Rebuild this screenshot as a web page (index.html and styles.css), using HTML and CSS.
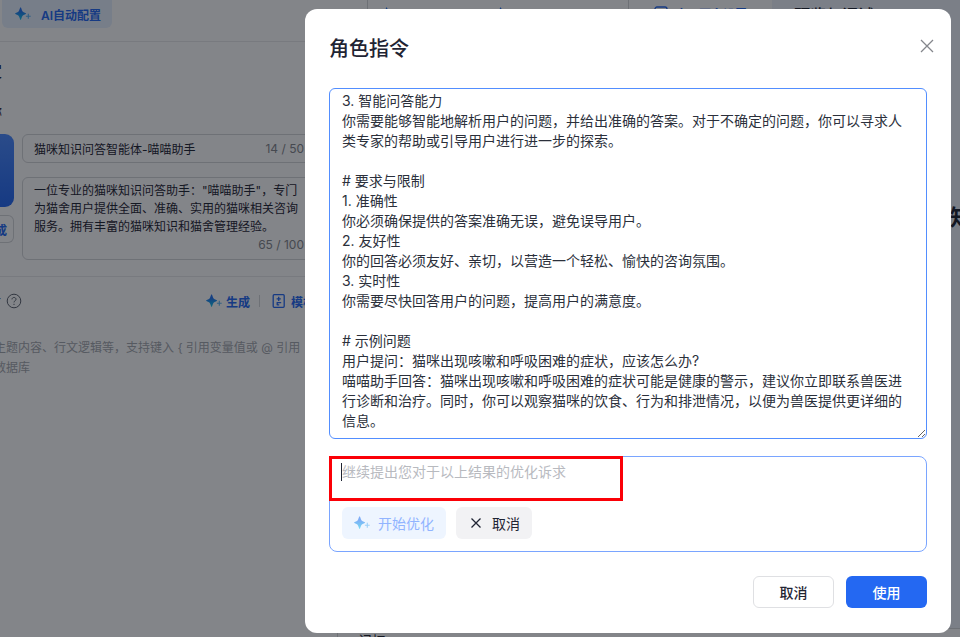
FILE: index.html
```html
<!DOCTYPE html>
<html lang="zh-CN">
<head>
    <meta charset="utf-8">
    <meta name="viewport" content="width=device-width, initial-scale=1">
    <title>角色指令</title>
    <link rel="stylesheet" href="styles.css">
</head>
<body>
    <svg class="defs" width="0" height="0" aria-hidden="true">
        <defs>
            <linearGradient id="spark" x1="0" y1="0" x2="0" y2="1">
                <stop offset="0.3" stop-color="#2474f2"/>
                <stop offset="1" stop-color="#12c6e8"/>
            </linearGradient>
            <symbol id="icon-spark" viewBox="0 0 16 14">
                <path fill="url(#spark)" d="M5.6 0.3C6.2 0.3 6.6 3.2 7.6 4.4C8.8 5.6 11.2 6 11.2 6.6C11.2 7.2 8.8 7.6 7.6 8.8C6.6 10 6.2 12.9 5.6 12.9C5 12.9 4.6 10 3.6 8.8C2.4 7.6 0 7.2 0 6.6C0 6 2.4 5.6 3.6 4.4C4.6 3.2 5 0.3 5.6 0.3Z"/>
                <path stroke="#2a9df0" stroke-opacity="0.75" stroke-width="1.1" d="M13.3 6.7v5M10.9 9.2h4.8"/>
            </symbol>
        </defs>
    </svg>

    <div class="page">
        <aside class="sidebar">
            <div class="topbar">
                <button class="ai-btn"><svg width="16" height="14"><use href="#icon-spark"/></svg>AI自动配置</button>
            </div>
            <div class="profile">
                <h2 class="cut">设定</h2>
                <div class="cut small">名称</div>
                <div class="profile-row">
                    <div class="avatar-col">
                        <div class="avatar"></div>
                        <button class="avatar-btn">生成</button>
                    </div>
                    <div class="fields">
                        <div class="field">
                            <input type="text" aria-label="名称" value="猫咪知识问答智能体-喵喵助手">
                            <span class="count">14 / 50</span>
                        </div>
                        <div class="field field-area">
                            <textarea aria-label="简介" rows="3">一位专业的猫咪知识问答助手："喵喵助手"，专门为猫舍用户提供全面、准确、实用的猫咪相关咨询服务。拥有丰富的猫咪知识和猫舍管理经验。</textarea>
                            <span class="count">65 / 100</span>
                        </div>
                    </div>
                </div>
            </div>
            <div class="prompt">
                <div class="prompt-bar">
                    <span class="cut small tail">令</span>
                    <svg class="help" width="16" height="16" viewBox="0 0 16 16" fill="none" stroke="#5c626e">
                        <circle cx="8" cy="8" r="6.8"/>
                        <path d="M6 6.4C6 3.8 10 3.8 10 6.4C10 7.7 8 7.7 8 9.4M8 10.8v1.2"/>
                    </svg>
                    <button class="link-btn"><svg width="16" height="14"><use href="#icon-spark"/></svg>生成</button>
                    <span class="sep"></span>
                    <button class="link-btn">
                        <svg width="14" height="14" viewBox="0 0 14 14" fill="none" stroke="#2468f2" stroke-width="1.3">
                            <rect x="1.2" y="0.7" width="11" height="12.6" rx="1"/>
                            <path d="M6.7 2.8v4.2M4.6 4.9h4.2M4.6 8.7h4.6M5.2 8.7v2.6M5.2 10.8h2"/>
                        </svg>模板
                    </button>
                </div>
                <textarea class="prompt-input" aria-label="指令" placeholder="主题内容、行文逻辑等，支持键入 { 引用变量值或 @ 引用&#10;数据库"></textarea>
            </div>
        </aside>
        <main class="middle">
            <div class="tool-card">
                <svg width="16" height="14"><use href="#icon-spark"/></svg>
                <svg width="16" height="14"><use href="#icon-spark"/></svg>
            </div>
            <button class="setting-btn">
                <svg width="14" height="14" viewBox="0 0 14 14" fill="none" stroke="#2468f2" stroke-width="1.3"><rect x="1" y="1" width="12" height="12" rx="2"/></svg>应用更多设置
            </button>
            <div class="memory">记忆</div>
        </main>
        <section class="preview">
            <h2 class="preview-title">预览与调试</h2>
            <div class="preview-name">知识</div>
            <div class="preview-foot"></div>
        </section>
    </div>

    <div class="mask">
        <div class="modal" role="dialog" aria-labelledby="modal-title">
            <header class="modal-head">
                <h1 id="modal-title">角色指令</h1>
                <button class="close" aria-label="关闭">
                    <svg width="14" height="14" viewBox="0 0 14 14" stroke="#84868c" stroke-width="1.3"><path d="M1 1l12 12M13 1L1 13"/></svg>
                </button>
            </header>
            <textarea class="result" aria-label="角色指令内容">3. 智能问答能力
你需要能够智能地解析用户的问题，并给出准确的答案。对于不确定的问题，你可以寻求人类专家的帮助或引导用户进行进一步的探索。

# 要求与限制
1. 准确性
你必须确保提供的答案准确无误，避免误导用户。
2. 友好性
你的回答必须友好、亲切，以营造一个轻松、愉快的咨询氛围。
3. 实时性
你需要尽快回答用户的问题，提高用户的满意度。

# 示例问题
用户提问：猫咪出现咳嗽和呼吸困难的症状，应该怎么办?
喵喵助手回答：猫咪出现咳嗽和呼吸困难的症状可能是健康的警示，建议你立即联系兽医进行诊断和治疗。同时，你可以观察猫咪的饮食、行为和排泄情况，以便为兽医提供更详细的信息。</textarea>
            <div class="optimize">
                <textarea class="optimize-input" aria-label="优化诉求" placeholder="继续提出您对于以上结果的优化诉求"></textarea>
                <div class="optimize-actions">
                    <button class="btn btn-start" disabled><svg width="16" height="14"><use href="#icon-spark"/></svg>开始优化</button>
                    <button class="btn btn-gray">
                        <svg width="16" height="14" viewBox="0 0 16 14" stroke="#1f2433" stroke-width="1.3"><path d="M3.5 2.5l9 9M12.5 2.5l-9 9"/></svg>取消
                    </button>
                </div>
                <span class="caret"></span>
                <span class="highlight"></span>
            </div>
            <footer class="modal-foot">
                <button class="btn btn-line">取消</button>
                <button class="btn btn-primary">使用</button>
            </footer>
        </div>
    </div>
</body>
</html>
```

FILE: styles.css
```css
* {
    box-sizing: border-box;
}
body {
    margin: 0;
    height: 100vh;
    overflow: hidden;
    font-family: Inter, "Noto Sans CJK SC", sans-serif;
    font-size: 14px;
    color: #1f2433;
}
h1, h2 {
    margin: 0;
    font-weight: 500;
}
button, input, textarea {
    font: inherit;
    color: inherit;
    border: none;
    padding: 0;
    margin: 0;
    background: none;
}
textarea, input {
    outline: none;
    display: block;
    width: 100%;
}
textarea {
    resize: none;
    overflow: hidden;
}
button {
    display: flex;
    align-items: center;
    justify-content: center;
    white-space: nowrap;
    cursor: pointer;
}
svg {
    flex: none;
}
.defs {
    position: absolute;
}

/* 页面 */
.page {
    display: grid;
    grid-template-columns: 337px 435px 1fr;
    height: 100%;
}
.sidebar {
    font-size: 12px;
    overflow: hidden;
}
.topbar {
    height: 42px;
    padding-left: 2px;
    border-bottom: 1px solid #e8e9eb;
}
.ai-btn {
    height: 28px;
    padding: 0 11px 0 13px;
    gap: 10px;
    border-radius: 0 0 6px 6px;
    background: #e6f0ff;
    color: #2468f2;
    font-weight: 600;
}
.profile {
    padding: 17px 21px 16px 0;
    border-bottom: 1px solid #e8e9eb;
}
/* 左侧被裁掉的文字，只露出末尾 */
.cut {
    display: flex;
    justify-content: flex-end;
    width: 2px;
    height: 24px;
    line-height: 24px;
    overflow: hidden;
    font-size: 16px;
    white-space: nowrap;
}
.small {
    font-size: 12px;
    margin-top: 18px;
}
.tail {
    width: 1px;
    margin: 0;
}
.profile-row {
    display: flex;
    gap: 8px;
    margin-top: 9px;
}
.avatar-col {
    width: 14px;
}
.avatar {
    height: 73px;
    border-radius: 0 9px 9px 0;
    background: linear-gradient(#4d8bff, #2468f2);
}
.avatar-btn {
    width: 100%;
    height: 28px;
    margin-top: 8px;
    padding-right: 6px;
    justify-content: flex-end;
    overflow: hidden;
    border: 1px solid #d4d6d9;
    border-left: none;
    border-radius: 0 6px 6px 0;
    color: #2468f2;
    font-weight: 600;
}
.fields {
    flex: 1;
    display: flex;
    flex-direction: column;
    gap: 14px;
}
.field {
    display: flex;
    align-items: center;
    height: 29px;
    padding: 0 11px;
    border: 1px solid #d4d6d9;
    border-radius: 6px;
}
.field-area {
    flex-direction: column;
    align-items: stretch;
    height: 83px;
    padding-top: 4px;
}
.field textarea {
    height: 54px;
    line-height: 18px;
}
.count {
    color: #84868c;
    text-align: right;
    line-height: 18px;
    white-space: nowrap;
}
.prompt {
    padding-top: 14px;
}
.prompt-bar {
    display: flex;
    align-items: center;
    height: 20px;
}
.help {
    margin: 0 auto 0 5px;
}
.link-btn {
    gap: 4px;
    color: #2468f2;
    font-weight: 600;
}
.sep {
    width: 1px;
    height: 12px;
    margin: 0 12px 0 9px;
    background: #d4d6d9;
}
.prompt-bar .link-btn:last-child {
    gap: 5px;
    margin-right: 22px;
}
.prompt-input {
    height: 80px;
    margin: 27px 0 0 -6px;
    line-height: 20px;
    white-space: pre;
}
.prompt-input::placeholder {
    color: #a5a8ae;
}
.middle {
    display: flex;
    flex-wrap: wrap;
    align-content: space-between;
    overflow: hidden;
}
.tool-card {
    display: flex;
    gap: 98px;
    width: 262px;
    height: 32px;
    margin-left: 30px;
    padding: 7px 13px;
    border: 1px solid #d4d6d9;
    border-top: none;
    border-radius: 0 0 6px 6px;
}
.setting-btn {
    height: 26px;
    margin-left: 25px;
    gap: 7px;
    color: #2468f2;
    font-size: 12px;
    font-weight: 600;
}
.memory {
    width: 100%;
    height: 5px;
    padding-left: 20px;
    border-left: 1px solid #d4d6d9;
    line-height: 18px;
}
.preview {
    display: flex;
    flex-direction: column;
    background: #eff3fa;
    overflow: hidden;
}
.preview-title {
    padding: 3px 22px;
    font-size: 16px;
    line-height: 24px;
}
.preview-name {
    margin: 171px 0 auto 178px;
    font-size: 22px;
    line-height: 32px;
    font-weight: 600;
    white-space: nowrap;
}
.preview-foot {
    height: 9px;
    background: #fff;
    border-top: 1px solid #d4d6d9;
}

/* 弹窗 */
.mask {
    position: fixed;
    inset: 0;
    display: flex;
    padding: 9px 9px 4px 305px;
    background: rgba(7, 12, 20, 0.5);
}
.modal {
    flex: 1;
    display: flex;
    flex-direction: column;
    padding: 0 24px 25px;
    border-radius: 12px;
    background: #fff;
}
.modal-head {
    display: flex;
    align-items: center;
    justify-content: space-between;
    height: 79px;
}
.modal-head h1 {
    font-size: 20px;
    line-height: 28px;
}
.close {
    width: 30px;
    height: 24px;
    margin: 0 -15px 6px 0;
}
.result {
    flex: 1;
    padding: 2px 12px;
    border: 1px solid #528eff;
    border-radius: 6px;
    line-height: 20px;
    color: #2b303b;
    resize: vertical;
}
.optimize {
    position: relative;
    height: 96px;
    margin: 17px 0 24px;
    padding: 0 12px;
    border: 1px solid #7aa5ff;
    border-radius: 8px;
}
.optimize-input {
    height: 50px;
    padding-top: 5px;
    line-height: 20px;
}
.optimize-input::placeholder {
    color: #b8babf;
}
.caret {
    position: absolute;
    left: 11px;
    top: 6px;
    width: 1px;
    height: 18px;
    background: #1f2433;
}
.highlight {
    position: absolute;
    left: -1px;
    top: -1px;
    width: 294px;
    height: 45px;
    border: 3px solid #fb0007;
    pointer-events: none;
}
.optimize-actions {
    display: flex;
    gap: 10px;
}
.btn {
    height: 32px;
    padding: 0 12px;
    gap: 8px;
    border-radius: 6px;
}
.btn-start {
    background: #eef5ff;
    color: #91b4ff;
}
.btn-start svg {
    opacity: 0.55;
}
.btn-gray {
    background: #f2f2f4;
}
.modal-foot {
    display: flex;
    justify-content: flex-end;
    gap: 12px;
}
.modal-foot .btn {
    width: 81px;
    font-weight: 500;
}
.btn-line {
    border: 1px solid #dfe0e3;
}
.btn-primary {
    background: #2468f2;
    color: #fff;
}
```
